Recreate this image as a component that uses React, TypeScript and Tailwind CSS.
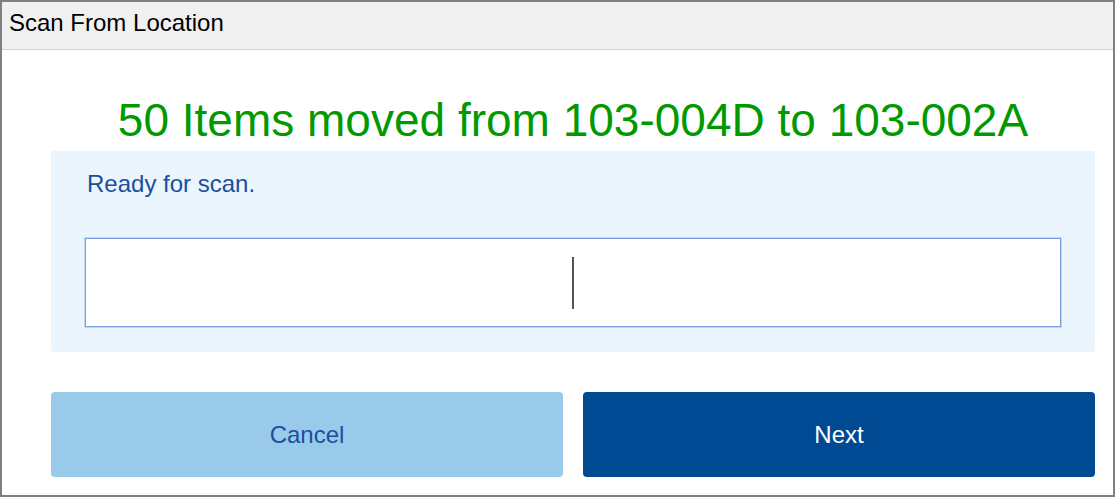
/**
 * Scan From Location dialog
 */

import React from "react";

const font = { fontFamily: '"Liberation Sans", Arial, sans-serif' };

export default function App(): React.ReactElement {
  return (
    <div
      className="w-[1115px] h-[497px] border-2 border-[#808080] bg-white flex flex-col overflow-hidden"
      style={font}
    >
      {/* Title bar */}
      <div className="h-[48px] shrink-0 bg-[#f0f0f0] border-b border-[#d0d0d0] flex items-center pl-[7px] pb-[6px]">
        <span className="text-[24px] leading-[28px] text-black">Scan From Location</span>
      </div>

      {/* Body */}
      <div className="flex flex-col pl-[49px] pr-[18px]">
        <h1 className="mt-[45px] text-center text-[46px] leading-[50px] text-[#009a00]">
          50 Items moved from 103-004D to 103-002A
        </h1>

        <div className="mt-[6px] h-[201px] rounded-[3px] bg-[#eaf5fd] px-[34px] pt-[19px] flex flex-col">
          <p className="text-[24px] leading-[28px] text-[#1c4f9b] pl-[2px]">Ready for scan.</p>
          <div className="mt-[40px] h-[89px] bg-white border border-[#7c9fe2] shadow-[0_0_0_1px_#c3d5f5] flex items-center justify-center">
            <div className="w-[2px] h-[52px] bg-[#555555]" />
          </div>
        </div>

        <div className="mt-[40px] grid grid-cols-2 gap-[20px]">
          <button className="h-[85px] rounded-[4px] bg-[#99caea] text-[24px] text-[#1c4f9b]">
            Cancel
          </button>
          <button className="h-[85px] rounded-[4px] bg-[#004a94] text-[24px] text-white">
            Next
          </button>
        </div>
      </div>
    </div>
  );
}
